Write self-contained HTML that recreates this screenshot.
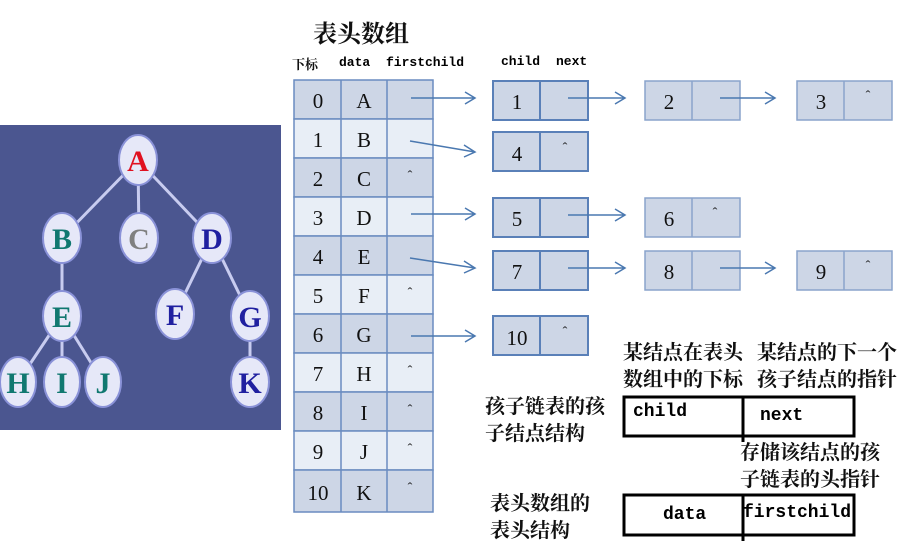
<!DOCTYPE html>
<html><head><meta charset="utf-8"><style>
body{margin:0;width:913px;height:553px;background:#fff;position:relative;overflow:hidden;font-family:"Liberation Serif","Noto Serif CJK SC",serif;}
.a{position:absolute;white-space:nowrap}
.cn{font-family:"Liberation Serif","Noto Serif CJK SC","Noto Sans CJK SC",serif;font-weight:bold;color:#111}
.mono{font-family:"Liberation Mono",monospace;font-weight:bold;}
</style></head><body>
<svg class="a" style="left:0;top:0" width="913" height="553">
<rect x="0" y="125" width="281" height="305" fill="#4b5690"/>
<g stroke="#c8ccf0" stroke-width="3">
<line x1="138" y1="160" x2="62" y2="238"/><line x1="138" y1="160" x2="139" y2="238"/><line x1="138" y1="160" x2="212" y2="238"/>
<line x1="62" y1="238" x2="62" y2="316"/><line x1="212" y1="238" x2="175" y2="314"/><line x1="212" y1="238" x2="250" y2="316"/>
<line x1="62" y1="316" x2="18" y2="382"/><line x1="62" y1="316" x2="62" y2="382"/><line x1="62" y1="316" x2="103" y2="382"/><line x1="250" y1="316" x2="250" y2="382"/>
</g>
<g fill="#e6e8f8" stroke="#8a92d8" stroke-width="2">
<ellipse cx="138" cy="160" rx="19" ry="25"/><ellipse cx="62" cy="238" rx="19" ry="25"/><ellipse cx="139" cy="238" rx="19" ry="25"/><ellipse cx="212" cy="238" rx="19" ry="25"/>
<ellipse cx="62" cy="316" rx="19" ry="25"/><ellipse cx="175" cy="314" rx="19" ry="25"/><ellipse cx="250" cy="316" rx="19" ry="25"/>
<ellipse cx="18" cy="382" rx="18" ry="25"/><ellipse cx="62" cy="382" rx="18" ry="25"/><ellipse cx="103" cy="382" rx="18" ry="25"/><ellipse cx="250" cy="382" rx="19" ry="25"/>
</g>
<g font-family="Liberation Serif" font-weight="bold" font-size="30" text-anchor="middle">
<text x="138" y="171" fill="#e01020">A</text><text x="62" y="249" fill="#107870">B</text><text x="139" y="249" fill="#808080">C</text><text x="212" y="249" fill="#2020a0">D</text>
<text x="62" y="327" fill="#107870">E</text><text x="175" y="325" fill="#2020a0">F</text><text x="250" y="327" fill="#2020a0">G</text>
<text x="18" y="393" fill="#107870">H</text><text x="62" y="393" fill="#107870">I</text><text x="103" y="393" fill="#107870">J</text><text x="250" y="393" fill="#2020a0">K</text>
</g>
<g stroke="#6a8cc0" stroke-width="1.5">
<rect x="294" y="80" width="139" height="39" fill="#cdd6e6"/>
<rect x="294" y="119" width="139" height="39" fill="#e8eef6"/>
<rect x="294" y="158" width="139" height="39" fill="#cdd6e6"/>
<rect x="294" y="197" width="139" height="39" fill="#e8eef6"/>
<rect x="294" y="236" width="139" height="39" fill="#cdd6e6"/>
<rect x="294" y="275" width="139" height="39" fill="#e8eef6"/>
<rect x="294" y="314" width="139" height="39" fill="#cdd6e6"/>
<rect x="294" y="353" width="139" height="39" fill="#e8eef6"/>
<rect x="294" y="392" width="139" height="39" fill="#cdd6e6"/>
<rect x="294" y="431" width="139" height="39" fill="#e8eef6"/>
<rect x="294" y="470" width="139" height="42" fill="#cdd6e6"/>
<line x1="341" y1="80" x2="341" y2="512"/><line x1="387" y1="80" x2="387" y2="512"/>
</g>
<g font-family="Liberation Serif" font-size="21" text-anchor="middle" fill="#111">
<text x="318" y="108">0</text><text x="364" y="108">A</text>
<text x="318" y="147">1</text><text x="364" y="147">B</text>
<text x="318" y="186">2</text><text x="364" y="186">C</text>
<text x="318" y="225">3</text><text x="364" y="225">D</text>
<text x="318" y="264">4</text><text x="364" y="264">E</text>
<text x="318" y="303">5</text><text x="364" y="303">F</text>
<text x="318" y="342">6</text><text x="364" y="342">G</text>
<text x="318" y="381">7</text><text x="364" y="381">H</text>
<text x="318" y="420">8</text><text x="364" y="420">I</text>
<text x="318" y="459">9</text><text x="364" y="459">J</text>
<text x="318" y="500">10</text><text x="364" y="500">K</text>
</g>
<g font-family="Liberation Serif" font-size="14" text-anchor="middle" fill="#111">
<text x="410" y="180">ˆ</text><text x="410" y="297">ˆ</text><text x="410" y="375">ˆ</text><text x="410" y="414">ˆ</text><text x="410" y="453">ˆ</text><text x="410" y="492">ˆ</text>
</g>
<g stroke="#5a80b8" stroke-width="2" fill="#cdd6e6">
<rect x="493" y="81" width="95" height="39"/><line x1="540" y1="81" x2="540" y2="120"/>
<rect x="493" y="132" width="95" height="39"/><line x1="540" y1="132" x2="540" y2="171"/>
<rect x="493" y="198" width="95" height="39"/><line x1="540" y1="198" x2="540" y2="237"/>
<rect x="493" y="251" width="95" height="39"/><line x1="540" y1="251" x2="540" y2="290"/>
<rect x="493" y="316" width="95" height="39"/><line x1="540" y1="316" x2="540" y2="355"/>
</g>
<g stroke="#8aa4cc" stroke-width="1.5" fill="#cdd6e6">
<rect x="645" y="81" width="95" height="39"/><line x1="692" y1="81" x2="692" y2="120"/>
<rect x="797" y="81" width="95" height="39"/><line x1="844" y1="81" x2="844" y2="120"/>
<rect x="645" y="198" width="95" height="39"/><line x1="692" y1="198" x2="692" y2="237"/>
<rect x="645" y="251" width="95" height="39"/><line x1="692" y1="251" x2="692" y2="290"/>
<rect x="797" y="251" width="95" height="39"/><line x1="844" y1="251" x2="844" y2="290"/>
</g>
<g font-family="Liberation Serif" font-size="21" text-anchor="middle" fill="#111">
<text x="517" y="109">1</text><text x="517" y="161">4</text><text x="517" y="226">5</text><text x="517" y="279">7</text><text x="517" y="345">10</text>
<text x="669" y="109">2</text><text x="821" y="109">3</text><text x="669" y="226">6</text><text x="669" y="279">8</text><text x="821" y="279">9</text>
</g>
<g font-family="Liberation Serif" font-size="14" text-anchor="middle" fill="#111">
<text x="565" y="152">ˆ</text><text x="565" y="336">ˆ</text><text x="868" y="100">ˆ</text><text x="715" y="217">ˆ</text><text x="868" y="270">ˆ</text>
</g>
<g stroke="#4a78b0" stroke-width="1.5" fill="none">
<path d="M411 98H475M465 92L475 98L465 104"/>
<path d="M410 141L475 152M464 145L475 152L464 157"/>
<path d="M411 214H475M465 208L475 214L465 220"/>
<path d="M410 258L475 268M464 261L475 268L464 273"/>
<path d="M411 336H475M465 330L475 336L465 342"/>
<path d="M568 98H625M615 92L625 98L615 104"/>
<path d="M720 98H775M765 92L775 98L765 104"/>
<path d="M568 215H625M615 209L625 215L615 221"/>
<path d="M568 268H625M615 262L625 268L615 274"/>
<path d="M720 268H775M765 262L775 268L765 274"/>
</g>
<g stroke="#000" stroke-width="3" fill="none">
<rect x="624" y="397" width="230" height="39"/><line x1="743" y1="397" x2="743" y2="442"/>
<rect x="624" y="495" width="230" height="40"/><line x1="743" y1="495" x2="743" y2="541"/>
</g>
</svg>
<div class="a cn" style="left:313px;top:20px;font-size:24px;line-height:30px">表头数组</div>
<div class="a cn" style="left:292px;top:54px;font-size:13px">下标</div>
<div class="a mono" style="left:339px;top:55px;font-size:13px">data</div>
<div class="a mono" style="left:386px;top:55px;font-size:13px">firstchild</div>
<div class="a mono" style="left:501px;top:54px;font-size:13px">child</div>
<div class="a mono" style="left:556px;top:54px;font-size:13px">next</div>
<div class="a cn" style="left:623px;top:340px;font-size:20px;line-height:27px">某结点在表头<br>数组中的下标</div>
<div class="a cn" style="left:757px;top:340px;font-size:20px;line-height:27px">某结点的下一个<br>孩子结点的指针</div>
<div class="a cn" style="left:485px;top:394px;font-size:20px;line-height:27px">孩子链表的孩<br>子结点结构</div>
<div class="a cn" style="left:740px;top:440px;font-size:20px;line-height:27px">存储该结点的孩<br>子链表的头指针</div>
<div class="a cn" style="left:490px;top:491px;font-size:20px;line-height:27px">表头数组的<br>表头结构</div>
<div class="a mono" style="left:633px;top:402px;font-size:18px">child</div>
<div class="a mono" style="left:760px;top:406px;font-size:18px">next</div>
<div class="a mono" style="left:663px;top:505px;font-size:18px">data</div>
<div class="a mono" style="left:743px;top:503px;font-size:18px">firstchild</div>
</body></html>
